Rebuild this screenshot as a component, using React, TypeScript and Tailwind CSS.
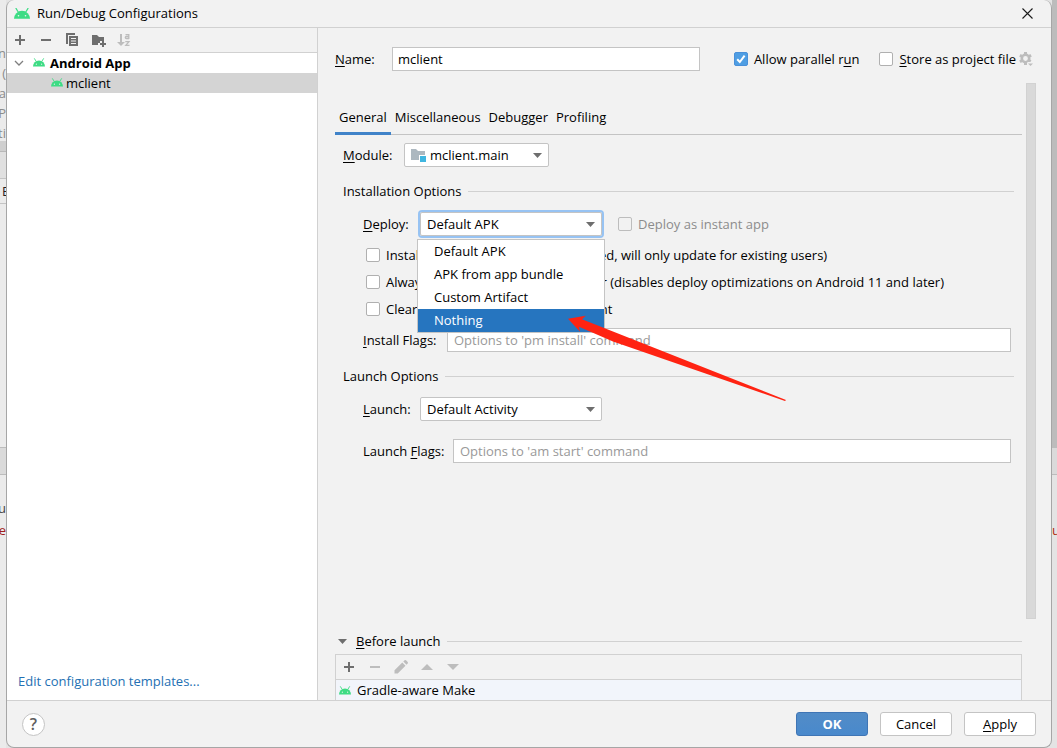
import type { ReactNode } from "react";

function Android({ className }: { className: string }) {
  return (
    <svg viewBox="0 0 16 11" className={className} aria-hidden="true">
      <path d="M2 .4 4.200 4M14 .4 11.800 4" stroke="#3ddc84" strokeWidth="1.200" strokeLinecap="round" />
      <path d="M0 10.800a8 8 0 0 1 16 0z" fill="#3ddc84" />
      <circle cx="4.500" cy="7.700" r=".8" fill="#f2f2f2" />
      <circle cx="11.500" cy="7.700" r=".8" fill="#f2f2f2" />
    </svg>
  );
}

function Plus({ className = "" }: { className?: string }) {
  return (
    <svg viewBox="0 0 16 16" className={`size-4 ${className}`} aria-hidden="true">
      <path d="M7 3h2v4h4v2H9v4H7V9H3V7h4z" fill="#6e6e6e" />
    </svg>
  );
}

function Minus({ color }: { color: string }) {
  return (
    <svg viewBox="0 0 16 16" className="size-4" aria-hidden="true">
      <path d="M3 7h10v2H3z" fill={color} />
    </svg>
  );
}

function CopyIcon() {
  return (
    <svg viewBox="0 0 16 16" className="size-4" aria-hidden="true">
      <path d="M2 1h9v2H4v9H2z" fill="#6e6e6e" />
      <path fillRule="evenodd" d="M5 4h9v10H5zM7 6v1h5V6zM7 8.500v1h5v-1zM7 11v1h5v-1z" fill="#6e6e6e" />
    </svg>
  );
}

function FolderPlus() {
  return (
    <svg viewBox="0 0 16 16" className="size-4" aria-hidden="true">
      <path d="M2 3h5l2 2h5v4h-4v2H8v2H2z" fill="#6e6e6e" />
      <path d="M12 9h2v2h2v2h-2v2h-2v-2h-2v-2h2z" fill="#6e6e6e" />
    </svg>
  );
}

function SortIcon() {
  return (
    <svg viewBox="0 0 16 16" className="size-4" aria-hidden="true">
      <path d="M4 2h2v8h3l-4 4-4-4h3z" fill="#bdbdbd" />
      <path
        d="M9.500 2.600h3.300V7M13 4.500H10.300q-1 0-1 1t1 1H13M9.300 9.600h3.700L9.800 13.400h3.700"
        fill="none"
        stroke="#bdbdbd"
        strokeWidth="1.300"
      />
    </svg>
  );
}

function ModuleIcon() {
  return (
    <svg viewBox="0 0 16 16" className="size-4" aria-hidden="true">
      <path d="M1 2h5l2 2h7v4H9v5H1z" fill="#adb8c0" />
      <path d="M10 9h6v6h-6z" fill="#40b6e0" />
    </svg>
  );
}

function GearIcon() {
  return (
    <svg viewBox="0 0 16 16" className="size-4" aria-hidden="true">
      <g fill="none" stroke="#bdbdbd">
        <circle cx="7.500" cy="7.500" r="3.700" strokeWidth="2.600" />
        <path
          d="M7.500 1v2.500M7.500 11.500V14M1.900 4.300l2.200 1.200M10.900 9.500l1.800 1M1.900 10.700l2.200-1.200M10.900 5.500l2.200-1.200"
          strokeWidth="3"
        />
      </g>
      <path d="M9 11h7l-3.500 4z" fill="#f2f2f2" />
      <path d="M10 12.500h5L12.500 15z" fill="#bdbdbd" />
    </svg>
  );
}

function Pencil() {
  return (
    <svg viewBox="0 0 16 16" className="size-4" aria-hidden="true">
      <path
        d="M1.500 14.500v-3.200L9.300 3.500l3.200 3.200-7.800 7.800zM10.300 2.500l1.300-1.200q.7-.6 1.400 0l1.700 1.700q.6.7 0 1.400l-1.200 1.300z"
        fill="#bdbdbd"
      />
    </svg>
  );
}

function Triangle({ up = false, className }: { up?: boolean; className: string }) {
  return (
    <svg viewBox="0 0 10 5" className={className} preserveAspectRatio="none" aria-hidden="true">
      <path d={up ? "M0 5h10L5 0z" : "M0 0h10L5 5z"} fill="currentColor" />
    </svg>
  );
}

function Check({
  id,
  children,
  checked,
  disabled,
}: {
  id: string;
  children: ReactNode;
  checked?: boolean;
  disabled?: boolean;
}) {
  return (
    <div className="flex items-center gap-1.5 whitespace-nowrap">
      <span className="relative flex size-3.5 shrink-0">
        <input
          id={id}
          type="checkbox"
          defaultChecked={checked}
          disabled={disabled}
          className="peer size-3.5 appearance-none rounded-xs border border-[#b0b0b0] bg-white checked:border-[#4a90d9] checked:bg-[#4f9ee3] disabled:border-[#bdbdbd] disabled:bg-[#f2f2f2]"
        />
        <svg
          viewBox="0 0 14 14"
          className="pointer-events-none absolute inset-0 hidden size-3.5 peer-checked:block"
          aria-hidden="true"
        >
          <path d="M3.200 7.300l2.600 2.700 4.800-6.300" fill="none" stroke="#fff" strokeWidth="2" />
        </svg>
      </span>
      <label htmlFor={id} className={disabled ? "text-[#8c8c8c]" : ""}>
        {children}
      </label>
    </div>
  );
}

function Combo({
  id,
  options,
  className,
  icon,
}: {
  id: string;
  options: string[];
  className: string;
  icon?: ReactNode;
}) {
  return (
    <div className="relative flex">
      {icon && <span className="pointer-events-none absolute inset-y-0 left-1.5 flex items-center">{icon}</span>}
      <select
        id={id}
        className={`h-6 appearance-none rounded-xs border border-[#c4c4c4] bg-white outline-none ${className}`}
      >
        {options.map((o) => (
          <option key={o}>{o}</option>
        ))}
      </select>
      <span className="pointer-events-none absolute inset-y-0 right-[7px] flex items-center text-[#6e6e6e]">
        <Triangle className="h-[5px] w-[9px]" />
      </span>
    </div>
  );
}

function Section({ title }: { title: string }) {
  return (
    <h2 className="flex h-5 items-center gap-1.5 pr-2">
      {title}
      <span className="h-px flex-1 bg-[#d1d1d1]" />
    </h2>
  );
}

const deployOptions = ["Default APK", "APK from app bundle", "Custom Artifact", "Nothing"];
const tabs = ["General", "Miscellaneous", "Debugger", "Profiling"];

function LeftBackdrop() {
  return (
    <div
      aria-hidden="true"
      className="flex w-1.5 shrink-0 flex-col overflow-hidden whitespace-nowrap bg-[#ebebeb] text-[#8c8c8c]"
    >
      <div className="flex h-[141px] flex-col items-end pt-[43px] leading-5">
        <span>n</span>
        <span>(</span>
        <span>a</span>
        <span>P</span>
        <span>ti</span>
      </div>
      <div className="h-[11px] border-b border-[#b8b8b8] bg-[#cfcfcf]" />
      <div className="h-[27px] border-b border-[#c4c4c4] bg-[#e0e0e0]" />
      <div className="h-[25px] border-b border-[#c4c4c4] pl-0.5 leading-6 text-[#222]">E</div>
      <div className="h-[243px]" />
      <div className="h-7 border-y border-[#bcbcbc] bg-[#dadada]" />
      <div className="flex flex-col items-end pt-[22px] leading-[22px] text-[#444]">
        <span>u</span>
        <span className="text-[#a02020]">e</span>
      </div>
    </div>
  );
}

function RightBackdrop() {
  return (
    <div aria-hidden="true" className="flex w-[5px] shrink-0 flex-col overflow-hidden bg-[#e4e4e4]">
      <div className="h-[448px] bg-[#bcbcbc]" />
      <div className="h-[27px] border-b border-[#bcbcbc] bg-[#dadada]" />
      <div className="pt-11 leading-[22px] text-[#b02a10]">u</div>
    </div>
  );
}

export default function App() {
  return (
    <div className="flex min-h-screen bg-[#e4e4e4] font-['Open_Sans','Noto_Sans',sans-serif] text-[13px] leading-5 text-black">
      <LeftBackdrop />
      <div className="flex min-w-0 flex-1 flex-col rounded-lg border border-t-0 border-[#a6a6a6] bg-[#f2f2f2]">
        <header className="flex h-7 items-center border-b border-[#d1d1d1] pb-px pl-[7px] pr-4">
          <Android className="h-[11px] w-4" />
          <h1 className="ml-[7px] flex-1">Run/Debug Configurations</h1>
          <button aria-label="Close" className="flex size-4 items-center justify-center">
            <svg viewBox="0 0 11 11" className="size-[11px]" aria-hidden="true">
              <path d="M.5.5l10 10M10.500.5l-10 10" stroke="#1a1a1a" strokeWidth="1.100" />
            </svg>
          </button>
        </header>

        <div className="flex flex-1">
          <aside className="flex w-[311px] shrink-0 flex-col border-r border-[#d1d1d1] bg-white">
            <div className="flex h-[25px] items-center gap-2.5 border-b border-[#d1d1d1] bg-[#f2f2f2] pl-[5px]">
              <button aria-label="Add"><Plus /></button>
              <button aria-label="Remove"><Minus color="#6e6e6e" /></button>
              <button aria-label="Copy"><CopyIcon /></button>
              <button aria-label="New folder"><FolderPlus /></button>
              <button aria-label="Sort"><SortIcon /></button>
            </div>
            <ul role="tree" className="flex-1">
              <li role="treeitem" aria-expanded="true" className="flex h-5 items-center pb-px pl-[7px] font-bold">
                <svg viewBox="0 0 10 6" className="h-1.5 w-2.5" aria-hidden="true">
                  <path d="M1 1l4 4 4-4" fill="none" stroke="#7f7f7f" strokeWidth="1.300" />
                </svg>
                <Android className="ml-[9px] mr-[5px] h-[9px] w-3" />
                Android App
              </li>
              <li
                role="treeitem"
                aria-selected="true"
                className="flex h-5 items-center gap-[3px] bg-[#d4d4d4] pb-px pl-11"
              >
                <Android className="h-[9px] w-3" />
                mclient
              </li>
            </ul>
            <a href="#templates" className="mb-[9px] ml-[11px] self-start text-[#2470b3]">
              Edit configuration templates...
            </a>
          </aside>

          <main className="flex min-w-0 flex-1 flex-col pl-[17px]">
            <div className="flex h-[55px] items-center pr-[17px] pt-[7px]">
              <label htmlFor="name" className="w-[57px]"><u className="underline-offset-2">N</u>ame:</label>
              <input
                id="name"
                defaultValue="mclient"
                className="h-6 w-[308px] border border-[#c4c4c4] bg-white px-[5px] outline-none"
              />
              <div className="ml-auto flex items-center gap-5">
                <Check id="parallel" checked>Allow parallel r<u className="underline-offset-2">u</u>n</Check>
                <div className="flex items-center gap-0.5">
                  <Check id="store"><u className="underline-offset-2">S</u>tore as project file</Check>
                  <button aria-label="Storage options" className="shrink-0"><GearIcon /></button>
                </div>
              </div>
            </div>

            <div className="flex flex-1 pr-[15px]">
              <div className="min-w-0 flex-1 pr-1">
                <div role="tablist" className="flex h-[52px] items-end border-b border-[#c4c4c4]">
                  {tabs.map((t, i) => (
                    <button
                      key={t}
                      role="tab"
                      aria-selected={i === 0}
                      className={`-mb-px border-b-3 px-1 pb-[5px] ${i === 0 ? "border-[#4083c9]" : "border-transparent"}`}
                    >
                      {t}
                    </button>
                  ))}
                </div>

                <div className="pl-2">
                  <div className="flex items-center pt-2">
                    <label htmlFor="module" className="w-[61px]"><u className="underline-offset-2">M</u>odule:</label>
                    <Combo
                      id="module"
                      options={["mclient.main"]}
                      className="w-[145px] pl-[25px]"
                      icon={<ModuleIcon />}
                    />
                  </div>

                  <div className="pt-3.5"><Section title="Installation Options" /></div>

                  <div className="pl-5 pr-[11px]">
                    <div className="flex items-center pt-[11px]">
                      <label htmlFor="deploy" className="w-[57px]"><u className="underline-offset-2">D</u>eploy:</label>
                      <div className="relative mr-4 rounded-xs ring-2 ring-[#97c3f3]">
                        <Combo id="deploy" options={deployOptions} className="w-[182px] pl-1.5" />
                        <ul
                          role="listbox"
                          aria-label="Deploy"
                          className="absolute -left-[3px] top-[27px] z-10 w-[188px] border border-[#c4c4c4] bg-white"
                        >
                          {deployOptions.map((o) => (
                            <li
                              key={o}
                              role="option"
                              aria-selected={o === "Nothing"}
                              className="h-[23px] pl-4 leading-[23px] aria-selected:bg-[#2675bf] aria-selected:text-white"
                            >
                              {o}
                            </li>
                          ))}
                        </ul>
                        <svg
                          viewBox="0 0 220 88"
                          className="pointer-events-none absolute left-[148px] top-[102px] z-20 h-[88px] w-[220px]"
                          aria-hidden="true"
                        >
                          <path d="M0 4.700 17.700 1.700 14 5.300 218 86 217 87 45 27.500 11 12.700 12 17.700z" fill="#ff2312" />
                        </svg>
                      </div>
                      <Check id="instant" disabled>Deploy as instant app</Check>
                    </div>

                    <div className="flex flex-col gap-[7px] pl-[3px] pt-[9px]">
                      <Check id="all-users">
                        Install for all users (if already installed, will only update for existing users)
                      </Check>
                      <Check id="package-manager">
                        Always install with package manager (disables deploy optimizations on Android 11 and later)
                      </Check>
                      <Check id="clear-storage">Clear app storage before deployment</Check>
                    </div>

                    <div className="flex items-center pt-[9px]">
                      <label htmlFor="install-flags" className="w-[84px] shrink-0">
                        <u className="underline-offset-2">I</u>nstall Flags:
                      </label>
                      <input
                        id="install-flags"
                        placeholder="Options to 'pm install' command"
                        className="h-6 min-w-0 flex-1 border border-[#c4c4c4] bg-white px-1.5 outline-none placeholder:text-[#999]"
                      />
                    </div>
                  </div>

                  <div className="pt-3.5"><Section title="Launch Options" /></div>

                  <div className="pl-5 pr-[11px]">
                    <div className="flex items-center pt-[11px]">
                      <label htmlFor="launch" className="w-[57px]"><u className="underline-offset-2">L</u>aunch:</label>
                      <Combo id="launch" options={["Default Activity"]} className="w-[182px] pl-1.5" />
                    </div>
                    <div className="flex items-center pt-[18px]">
                      <label htmlFor="launch-flags" className="w-[90px] shrink-0">
                        Launch <u className="underline-offset-2">F</u>lags:
                      </label>
                      <input
                        id="launch-flags"
                        placeholder="Options to 'am start' command"
                        className="h-6 min-w-0 flex-1 border border-[#c4c4c4] bg-white px-1.5 outline-none placeholder:text-[#999]"
                      />
                    </div>
                  </div>
                </div>
              </div>
              <div className="w-2.5 shrink-0 border border-[#d2d2d2] bg-[#d9d9d9]" />
            </div>

            <section className="pr-[29px] pt-3">
              <h2 className="flex h-5 items-center">
                <Triangle className="ml-[3px] mr-[9px] h-[5px] w-[9px] text-[#6e6e6e]" />
                <span><u className="underline-offset-2">B</u>efore launch</span>
                <span className="ml-1.5 h-px flex-1 bg-[#d1d1d1]" />
              </h2>
              <div className="mt-[3px] border border-b-0 border-[#d1d1d1]">
                <div className="flex h-[25px] items-center gap-2.5 border-b border-[#d1d1d1] pl-[5px]">
                  <button aria-label="Add task"><Plus /></button>
                  <button aria-label="Remove task"><Minus color="#bdbdbd" /></button>
                  <button aria-label="Edit task"><Pencil /></button>
                  <button aria-label="Move up" className="flex w-4 justify-center text-[#bdbdbd]">
                    <Triangle up className="h-1.5 w-3" />
                  </button>
                  <button aria-label="Move down" className="flex w-4 justify-center text-[#bdbdbd]">
                    <Triangle className="h-1.5 w-3" />
                  </button>
                </div>
                <div className="flex h-5 items-center gap-1.5 bg-[#f2f5fb] pl-[3px]">
                  <Android className="h-[9px] w-3" />
                  Gradle-aware Make
                </div>
              </div>
            </section>
          </main>
        </div>

        <footer className="flex h-[47px] items-center gap-3 border-t border-[#d1d1d1] px-[15px]">
          <button
            aria-label="Help"
            className="mr-auto flex size-[23px] items-center justify-center rounded-full border border-[#c4c4c4] bg-white text-base font-semibold text-[#5e5e5e]"
          >
            ?
          </button>
          <button className="h-6 w-[72px] rounded-[3px] border border-[#3f75b5] bg-linear-to-b from-[#528cc7] to-[#4989cc] font-bold leading-5 text-white">
            OK
          </button>
          <button className="h-6 w-[72px] rounded-[3px] border border-[#c4c4c4] bg-white leading-5">Cancel</button>
          <button className="h-6 w-[72px] rounded-[3px] border border-[#c4c4c4] bg-white leading-5">
            <u className="underline-offset-2">A</u>pply
          </button>
        </footer>
      </div>
      <RightBackdrop />
    </div>
  );
}
